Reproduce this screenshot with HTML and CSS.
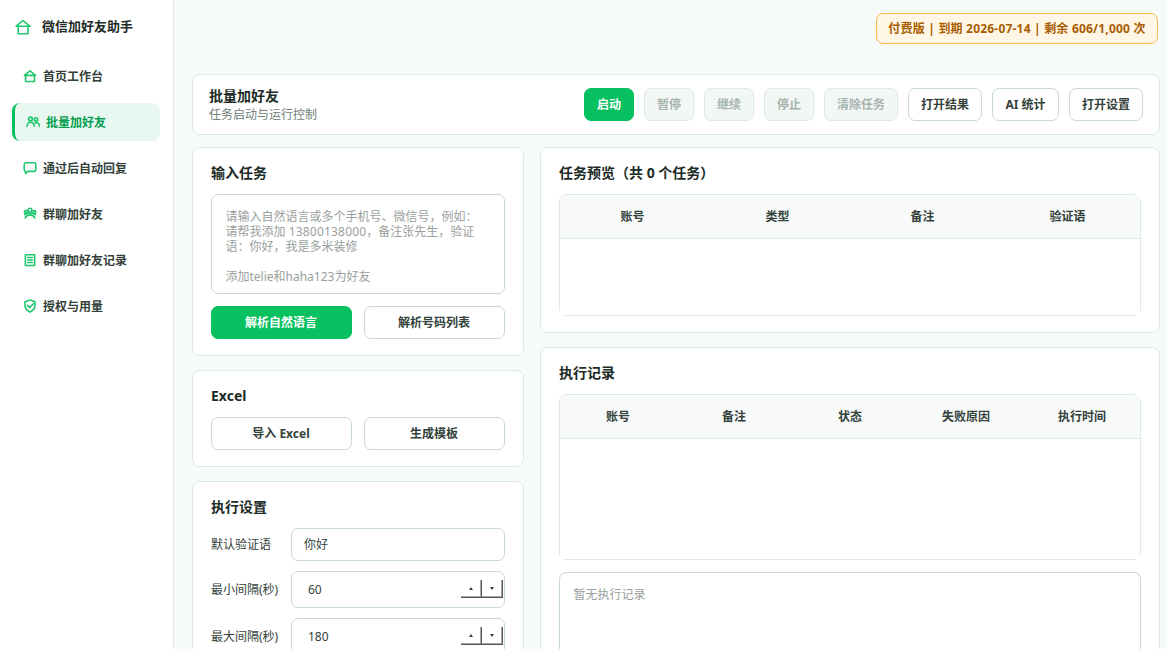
FILE: index.html
```html
<!DOCTYPE html>
<html lang="zh-CN">
<head>
<meta charset="utf-8">
<title>微信加好友助手</title>
<link rel="stylesheet" href="styles.css">
</head>
<body>
<div class="app">
  <aside class="sidebar">
    <div class="brand">
      <svg class="brand-icon" viewBox="0 0 16 16"><path d="M1.200 7.200 8 1.500l6.800 5.700M1.200 7.300h13.600M3.200 7.200v7.500h9.800V7.200"/></svg>
      <span>微信加好友助手</span>
    </div>
    <nav class="nav">
      <a class="nav-item"><svg class="icon" viewBox="0 0 14 14"><path d="M1.400 6.400 7 1.900l5.600 4.500M1.400 6.400h11.200M2.600 6.400v6.100h8.800V6.400"/></svg><span>首页工作台</span></a>
      <a class="nav-item active"><svg class="icon" viewBox="0 0 14 14"><circle cx="4.500" cy="4" r="1.900"/><circle cx="10" cy="4.400" r="1.700"/><path d="M1 11.200c.3-2.800 1.600-4 3.600-4s3.300 1.200 3.800 4M9.200 8c2.400-.8 4 .4 4.200 3"/></svg><span>批量加好友</span></a>
      <a class="nav-item"><svg class="icon" viewBox="0 0 14 14"><path d="M3.400 1.800h7.400q2 0 2 2v4.600q0 2-2 2H5.200l-2.600 2v-2.200q-1.400-.4-1.400-1.800V3.800q0-2 2.200-2z"/></svg><span>通过后自动回复</span></a>
      <a class="nav-item"><svg class="icon" viewBox="0 0 14 14"><circle cx="7" cy="3.200" r="1.900"/><circle cx="2.800" cy="5" r="1.400"/><circle cx="11.400" cy="5" r="1.400"/><path d="M2.200 11C3 8.800 4.800 7.900 7 7.900s4 .9 4.800 3.100M1.600 7.600C3.600 6.300 5 6 7 6s3.600.3 5.600 1.600"/></svg><span>群聊加好友</span></a>
      <a class="nav-item"><svg class="icon" viewBox="0 0 14 14"><path d="M2.400 1.700h9.200v10.800H2.400zM4.800 4.500h4.400M4.800 7h4.400M4.800 9.500h4.400"/></svg><span>群聊加好友记录</span></a>
      <a class="nav-item"><svg class="icon" viewBox="0 0 14 14"><path d="M7 1l5 1.800v4q0 3.800-5 6.200-5-2.400-5-6.200v-4zM4.400 6.400l2.200 2.200 3.800-3.800"/></svg><span>授权与用量</span></a>
    </nav>
  </aside>
  <main class="main">
    <header class="topbar"><div class="license">付费版 | 到期 2026-07-14 | 剩余 606/1,000 次</div></header>
    <section class="card toolbar">
      <div class="heading"><h1>批量加好友</h1><p>任务启动与运行控制</p></div>
      <div class="actions">
        <button class="btn primary">启动</button>
        <button class="btn" disabled>暂停</button>
        <button class="btn" disabled>继续</button>
        <button class="btn" disabled>停止</button>
        <button class="btn w4" disabled>清除任务</button>
        <button class="btn w4">打开结果</button>
        <button class="btn ai">AI 统计</button>
        <button class="btn w4">打开设置</button>
      </div>
    </section>
    <div class="columns">
      <div class="stack">
        <section class="card panel">
          <h2>输入任务</h2>
          <div class="textarea">请输入自然语言或多个手机号、微信号，例如：<br>请帮我添加 <span class="phone">13800138000</span>，备注张先生，验证<br>语：你好，我是多米装修<br><br>添加telie和haha123为好友</div>
          <div class="pair"><button class="btn primary">解析自然语言</button><button class="btn">解析号码列表</button></div>
        </section>
        <section class="card panel">
          <h2 class="latin">Excel</h2>
          <div class="pair excel"><button class="btn">导入 Excel</button><button class="btn">生成模板</button></div>
        </section>
        <section class="card panel settings">
          <h2>执行设置</h2>
          <div class="field"><label>默认验证语</label><div class="input">你好</div></div>
          <div class="field"><label>最小间隔(秒)</label><div class="input spin"><span>60</span><div class="steppers"><i class="step up"></i><i class="step down"></i></div></div></div>
          <div class="field"><label>最大间隔(秒)</label><div class="input spin"><span>180</span><div class="steppers"><i class="step up"></i><i class="step down"></i></div></div></div>
        </section>
      </div>
      <div class="stack">
        <section class="card panel">
          <h2>任务预览（共 <span class="latin">0</span> 个任务）</h2>
          <div class="table preview"><div class="thead"><span>账号</span><span>类型</span><span>备注</span><span>验证语</span></div></div>
        </section>
        <section class="card panel history">
          <h2>执行记录</h2>
          <div class="table records"><div class="thead"><span>账号</span><span>备注</span><span>状态</span><span>失败原因</span><span>执行时间</span></div></div>
          <div class="textarea log">暂无执行记录</div>
        </section>
      </div>
    </div>
  </main>
</div>
</body>
</html>
```
FILE: styles.css
```css
* { box-sizing: border-box; }
body {
  margin: 0;
  height: 649px;
  overflow: hidden;
  background: #f6faf8;
  color: #33413b;
  font: 12px/16px "Noto Sans", "Noto Sans CJK SC", sans-serif;
}
h1, h2, p { margin: 0; }
.app { display: flex; height: 649px; overflow: hidden; }
.sidebar {
  flex: 0 0 174px;
  background: #fff;
  border-right: 1px solid #dfe9e5;
}
.brand {
  display: flex;
  align-items: center;
  gap: 11px;
  height: 24px;
  margin: 15px 0 0 15px;
  color: #1c2b25;
  font-size: 13px;
  font-weight: 600;
}
.brand span { padding-bottom: 2px; }
.brand svg, .icon {
  fill: none;
  stroke: #1fc76f;
  stroke-width: 1.6;
  stroke-linejoin: round;
  stroke-linecap: round;
}
.brand-icon { width: 16px; height: 16px; }
.nav {
  display: flex;
  flex-direction: column;
  gap: 8px;
  padding: 18px 13px 0 12px;
}
.nav-item {
  display: flex;
  align-items: center;
  gap: 6px;
  height: 38px;
  padding-left: 11px;
  border-radius: 8px;
  font-weight: 600;
}
.nav-item span { padding-top: 2px; }
.nav-item.active {
  border-left: 3px solid #07c160;
  background: #e8f7f0;
  color: #079f50;
}
.icon { width: 14px; height: 14px; }
.main { flex: 1; padding: 0 7px 0 18px; }
.topbar {
  display: flex;
  justify-content: flex-end;
  height: 74px;
  padding: 13px 2px 0 0;
}
.license {
  width: 282px;
  height: 31px;
  border: 1px solid #ffb84d;
  border-radius: 7px;
  background: #fff6e5;
  color: #a85d00;
  font-weight: 700;
  letter-spacing: 0.2px;
  line-height: 29px;
  text-align: center;
  white-space: nowrap;
}
.card {
  border: 1px solid #dceae4;
  border-radius: 8px;
  background: #fff;
}
.toolbar {
  display: flex;
  justify-content: space-between;
  height: 61px;
  padding: 13px 16px;
}
h1, h2 { color: #1c2b25; font-size: 14px; line-height: 20px; font-weight: 600; }
.heading h1 { margin-top: -2px; }
.heading p { margin-top: 1px; color: #71807a; line-height: 16px; }
.actions { display: flex; gap: 10px; }
.btn {
  width: 50px;
  height: 33px;
  padding: 0;
  border: 1px solid #c8dad3;
  border-radius: 7px;
  background: #fff;
  color: #33413b;
  font: inherit;
  font-weight: 700;
  white-space: nowrap;
}
.btn.w4 { width: 74px; }
.btn.ai { width: 67px; }
.btn.primary { border-color: #07c160; background: #07c160; color: #fff; }
.btn:disabled { border-color: #dceae4; background: #f2f7f5; color: #a6b5af; font-weight: 600; }
.columns {
  display: grid;
  grid-template-columns: 332px 620px;
  gap: 16px;
  margin-top: 12px;
}
.stack { display: flex; flex-direction: column; gap: 14px; }
.panel { padding: 15px 18px 16px; }
.panel h2 { margin-bottom: 11px; }
.latin { font-weight: 700; }
.textarea {
  height: 100px;
  padding: 14px 13.500px;
  border: 1px solid #c8dad3;
  border-radius: 7px;
  color: #999f9c;
  line-height: 15px;
  white-space: nowrap;
}
.phone { letter-spacing: 0.2px; }
.pair {
  display: grid;
  grid-template-columns: 1fr 1fr;
  gap: 12px;
  margin-top: 12px;
}
.pair.excel { margin-top: 0; }
.pair .btn { width: 100%; padding-right: 1px; }
.settings { height: 260px; }
.field { display: flex; align-items: center; margin-bottom: 10px; }
.field label { width: 80px; white-space: nowrap; }
.input {
  display: flex;
  align-items: center;
  width: 214px;
  height: 33px;
  padding-left: 12px;
  border: 1px solid #c8dad3;
  border-radius: 7px;
}
.spin {
  justify-content: space-between;
  height: 37px;
  padding: 0 1px 0 16px;
}
.steppers { display: flex; height: 18px; margin-top: -1px; }
.step {
  display: flex;
  align-items: center;
  justify-content: center;
  width: 21px;
  height: 18px;
  border-right: 1px solid #555;
  border-bottom: 1px solid #555;
  box-shadow: inset -1px -1px #a8a8a8;
}
.step::before {
  content: "";
  border: 2px solid transparent;
}
.up::before { border-top: 0; border-bottom: 3px solid #33413b; }
.down::before { border-bottom: 0; border-top: 3px solid #33413b; }
/* The frame lines stop short of the rounded corners. */
.table {
  border-radius: 7px;
  background:
    linear-gradient(#dceae4, #dceae4) 5px 0 / calc(100% - 10px) 1px no-repeat,
    linear-gradient(#dceae4, #dceae4) 5px 100% / calc(100% - 10px) 1px no-repeat,
    linear-gradient(#dceae4, #dceae4) 0 5px / 1px calc(100% - 10px) no-repeat,
    linear-gradient(#dceae4, #dceae4) 100% 5px / 1px calc(100% - 10px) no-repeat;
  padding: 1px;
}
.preview { height: 122px; }
.records { height: 166px; }
.thead {
  display: grid;
  grid-auto-columns: 1fr;
  grid-auto-flow: column;
  align-items: center;
  height: 44px;
  border-bottom: 1px solid #dceae4;
  border-radius: 2px 2px 0 0;
  background: #f7faf9;
  font-weight: 600;
  text-align: center;
}
.history {
  padding-bottom: 0;
  border-bottom: 0;
  border-radius: 8px 8px 0 0;
}
.log {
  height: 77px;
  margin-top: 12px;
  border-bottom: 0;
  border-radius: 7px 7px 0 0;
}
```
